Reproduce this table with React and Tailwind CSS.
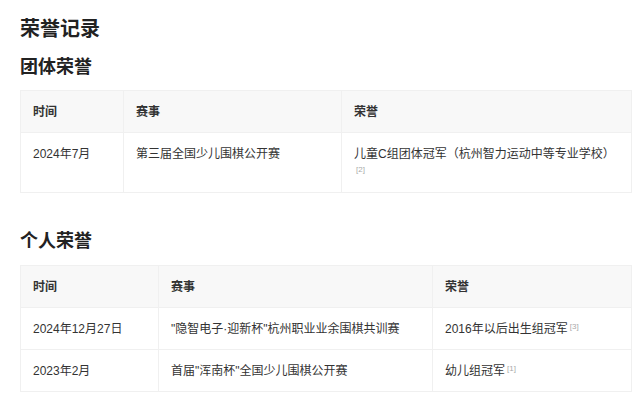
const TEAM = [
  { date: '2024年7月', event: '第三届全国少儿围棋公开赛', honor: '儿童C组团体冠军（杭州智力运动中等专业学校）', ref: 2 },
];

const PERSONAL = [
  { date: '2024年12月27日', event: '"隐智电子·迎新杯"杭州职业业余围棋共训赛', honor: '2016年以后出生组冠军', ref: 3 },
  { date: '2023年2月', event: '首届"浑南杯"全国少儿围棋公开赛', honor: '幼儿组冠军', ref: 1 },
];

function HonorTable({ rows, widths }) {
  return (
    <table className="w-[611px] table-fixed border-collapse border border-[#f0f0f0] text-[12px] leading-[18px] text-[#333]">
      <colgroup>
        {widths.map((w, i) => (
          <col key={i} style={{ width: w }} />
        ))}
      </colgroup>
      <thead>
        <tr className="bg-[#f8f8f8]">
          <th className="border border-[#f0f0f0] px-3 py-[11.5px] text-left font-bold">时间</th>
          <th className="border border-[#f0f0f0] px-3 py-[11.5px] text-left font-bold">赛事</th>
          <th className="border border-[#f0f0f0] px-3 py-[11.5px] text-left font-bold">荣誉</th>
        </tr>
      </thead>
      <tbody>
        {rows.map((r) => (
          <tr key={r.date}>
            <td className="border border-[#f0f0f0] px-3 py-[11.5px] align-top">{r.date}</td>
            <td className="border border-[#f0f0f0] px-3 py-[11.5px] align-top">{r.event}</td>
            <td className="border border-[#f0f0f0] px-3 py-[11.5px] align-top">
              {r.honor}
              <span className="relative -top-1 ml-0.5 align-baseline text-[8px] leading-none text-[#aaa]">[{r.ref}]</span>
            </td>
          </tr>
        ))}
      </tbody>
    </table>
  );
}

export default function App() {
  return (
    <div className="min-h-screen bg-white px-5 pt-[15px] font-['Liberation_Sans','Noto_Sans_CJK_SC',sans-serif] text-[#222]">
      <h1 className="text-[20px] font-bold leading-[28px]">荣誉记录</h1>
      <h2 className="mt-[11px] text-[18px] font-bold leading-[26px]">团体荣誉</h2>
      <div className="mt-[10px]">
        <HonorTable rows={TEAM} widths={[103, 218, 290]} />
      </div>
      <h2 className="mt-[35px] text-[18px] font-bold leading-[26px]">个人荣誉</h2>
      <div className="mt-[11px]">
        <HonorTable rows={PERSONAL} widths={[138, 274, 199]} />
      </div>
    </div>
  );
}
